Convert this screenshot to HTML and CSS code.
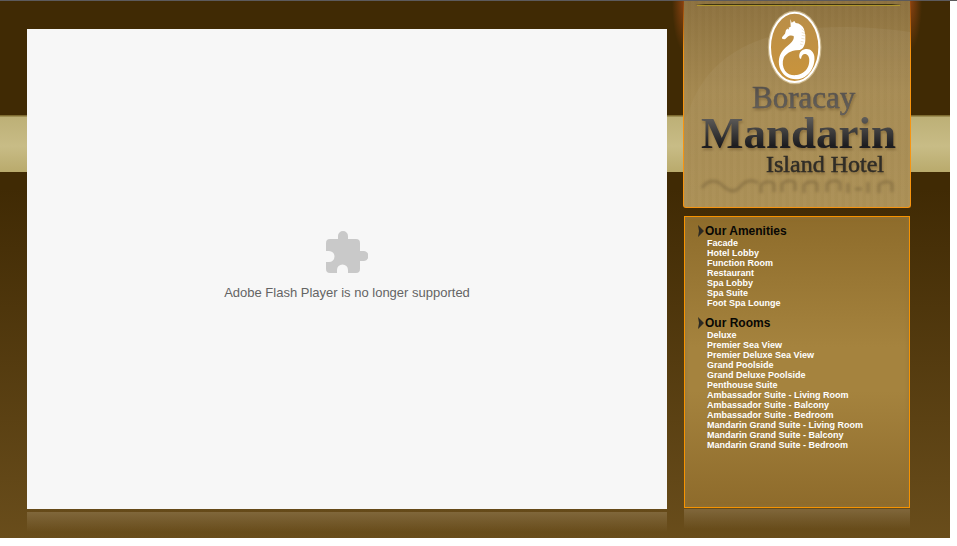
FILE: index.html
```html
<!DOCTYPE html>
<html lang="en">
<head>
<meta charset="utf-8">
<title>Boracay Mandarin Island Hotel - Gallery</title>
<link rel="stylesheet" href="styles.css">
</head>
<body>
<div class="page">
  <main class="stage">
    <div class="player">
      <svg class="puzzle" viewBox="0 0 42 42" aria-hidden="true"><path d="M38 20h-4v-8a4 4 0 0 0-4-4h-8V5a5 5 0 0 0-10 0v3H4a4 4 0 0 0-4 4v8h3a5.500 5.500 0 0 1 0 11H0v7a4 4 0 0 0 4 4h7v-3a5.500 5.500 0 0 1 11 0v3h8a4 4 0 0 0 4-4v-8h3a5 5 0 0 0 1-10z"/></svg>
      <p class="message">Adobe Flash Player is no longer supported</p>
    </div>
    <div class="shine player-shine"></div>
  </main>
  <aside class="sidebar">
    <div class="brand">
      <svg class="logo" viewBox="0 0 226 206" role="img" aria-label="Boracay Mandarin Island Hotel">
        <defs>
          <linearGradient id="ink" x1="0" y1="0" x2="0" y2="1"><stop offset=".2" stop-color="#5d5b58"/><stop offset=".75" stop-color="#1d1d20"/></linearGradient>
          <linearGradient id="grey" x1="0" y1="0" x2="0" y2="1"><stop offset="0" stop-color="#4f4a45"/><stop offset="1" stop-color="#68645f"/></linearGradient>
          <linearGradient id="gold" x1="0" y1="0" x2="0" y2="1"><stop offset="0" stop-color="#b98e48"/><stop offset="1" stop-color="#ca943b"/></linearGradient>
          <linearGradient id="fade" x1="0" y1="0" x2="0" y2="1"><stop offset="0" stop-color="#fff" stop-opacity=".05"/><stop offset="1" stop-color="#fff" stop-opacity="0"/></linearGradient>
          <linearGradient id="rule" x1="0" y1="0" x2="1" y2="0"><stop offset="0" stop-color="#3e3510" stop-opacity="0"/><stop offset=".05" stop-color="#3e3510"/><stop offset=".95" stop-color="#3e3510"/><stop offset="1" stop-color="#3e3510" stop-opacity="0"/></linearGradient>
          <filter id="soft" x="-10%" y="-50%" width="120%" height="200%"><feGaussianBlur stdDeviation="1.500"/></filter>
        </defs>
        <path d="M5 110C24 50 88 12 226 31V206H0V120z" fill="url(#fade)"/>
        <rect x="11" y="3" width="207" height="1" fill="url(#rule)"/>
        <rect x="13" y="4" width="203" height="1" fill="#b2972c"/>
        <g transform="translate(56 -1) scale(.3333)">
          <ellipse cx="164" cy="142" rx="76" ry="106" fill="none" stroke="#f5e6bf" stroke-width="9" opacity=".5"/>
          <ellipse cx="164" cy="142" rx="74" ry="104" fill="url(#gold)" stroke="#fff" stroke-width="6"/>
          <path fill="#fff" d="M151 57l4 11 8-5 4 6c12 1 21 8 25 18l4 18 0 15c0 10-3 17-8 25l-8 5-12 1c-14 1-31 10-37 23-5 12-3 27 4 38 8 11 21 15 36 13 17-2 31-15 35-30 4-14 2-28-7-32-8-3-14 1-16 14l-4-2c-4-12 2-24 15-27 16-4 27 7 29 21 3 23-8 49-29 62-17 10-41 9-56-2-18-13-26-38-19-60 6-18 20-29 31-38 9-8 13-15 11-23-6-3-14-2-18 2l-8 8-8-1-1-5 9-11 3-11 8-7 6-3z"/>
          <circle cx="145" cy="86" r="2" fill="#bd9145"/>
          <path d="M185 87l8 6m-8 4l10 4m-10 5l11 2m-12 7l10 2m-12 7l9 2m-11 6l8 2" stroke="#d7ba83" stroke-width="2" opacity=".6"/>
        </g>
        <g class="wordmark">
          <text x="68" y="107" font-size="31" fill="url(#grey)" stroke="#5b5650" stroke-width="0.500">Boracay</text>
          <text x="17" y="147" font-size="45" font-weight="bold" fill="url(#ink)">Mandarin</text>
          <text x="82" y="171" font-size="24" fill="#302d27" stroke="#302d27" stroke-width="0.500">Island Hotel</text>
        </g>
        <g filter="url(#soft)" opacity=".28" fill="none" stroke="#45351b" stroke-width="3"><path d="M18 187c5-8 14-9 20-3s12 8 17 3c6-8 14-9 19-5"/><path d="M77 192v-8c3-4 11-4 13-1v8M98 191v-8c3-4 11-4 13-1v8M120 192v-8c3-4 11-4 13-1v8M143 191v-8c3-4 11-4 13-1v8M164 192v-10M171 188h7M184 192v-11M195 192v-8c3-4 11-4 13-1v8"/></g>
      </svg>
    </div>
    <nav class="menu" aria-label="Gallery">
      <h2><svg class="arrow" viewBox="0 0 7 12" aria-hidden="true"><path d="M0 0l6 6-6 6 1-6z"/></svg>Our Amenities</h2>
      <ul>
        <li><a href="#facade">Facade</a></li>
        <li><a href="#lobby">Hotel Lobby</a></li>
        <li><a href="#function-room">Function Room</a></li>
        <li><a href="#restaurant">Restaurant</a></li>
        <li><a href="#spa-lobby">Spa Lobby</a></li>
        <li><a href="#spa-suite">Spa Suite</a></li>
        <li><a href="#foot-spa">Foot Spa Lounge</a></li>
      </ul>
      <h2><svg class="arrow" viewBox="0 0 7 12" aria-hidden="true"><path d="M0 0l6 6-6 6 1-6z"/></svg>Our Rooms</h2>
      <ul>
        <li><a href="#deluxe">Deluxe</a></li>
        <li><a href="#premier">Premier Sea View</a></li>
        <li><a href="#premier-deluxe">Premier Deluxe Sea View</a></li>
        <li><a href="#grand">Grand Poolside</a></li>
        <li><a href="#grand-deluxe">Grand Deluxe Poolside</a></li>
        <li><a href="#penthouse">Penthouse Suite</a></li>
        <li><a href="#ambassador-living">Ambassador Suite - Living Room</a></li>
        <li><a href="#ambassador-balcony">Ambassador Suite - Balcony</a></li>
        <li><a href="#ambassador-bedroom">Ambassador Suite - Bedroom</a></li>
        <li><a href="#mandarin-living">Mandarin Grand Suite - Living Room</a></li>
        <li><a href="#mandarin-balcony">Mandarin Grand Suite - Balcony</a></li>
        <li><a href="#mandarin-bedroom">Mandarin Grand Suite - Bedroom</a></li>
      </ul>
    </nav>
    <div class="shine menu-shine"></div>
  </aside>
</div>
</body>
</html>
```

FILE: styles.css
```css
* { box-sizing: border-box; }

body {
  margin: 0;
  padding: 0 7px 8px 0;
  background: linear-gradient(#5c5a5c, #5c5a5c) top / 100% 1px no-repeat #fff;
  font-family: "Liberation Sans", Arial, sans-serif;
}

.page {
  display: grid;
  grid-template-columns: minmax(0, 1fr) 228px;
  gap: 16px;
  padding: 0 39px 6px 27px;
  border-top: 1px solid #5c5a5c;
  background:
    linear-gradient(#7d6a30 0, #7d6a30 1px, #bdb077 2px, #c8bc86 55%, #b9aa6c 100%) 0 114px / 100% 57px no-repeat,
    linear-gradient(#402a04 0, #402a04 35%, #694d1b 100%);
}

.stage { padding-top: 28px; }

.player {
  display: flex;
  flex-direction: column;
  align-items: center;
  justify-content: center;
  gap: 12px;
  min-height: 480px;
  padding-bottom: 6px;
  background: #f7f7f7;
}

.puzzle {
  width: 42px;
  height: 42px;
  fill: #c9c9c9;
}

.message {
  margin: 0;
  color: #646464;
  font-size: 13px;
  line-height: 16px;
}

.shine {
  height: 20px;
  background: linear-gradient(#80673b, #80673b00);
}

.player-shine { margin-top: 3px; }

.menu-shine { margin: 1px 1px 0; }

.brand {
  position: relative;
  border: 1px solid #f79410;
  border-top: 0;
  border-radius: 0 0 3px 3px;
  background:
    repeating-linear-gradient(90deg, #ffffff03 0, #ffffff03 3px, #00000003 4px, #00000003 7px),
    linear-gradient(#8e7240, #a58950 45%, #ac9157);
}

.brand::before,
.brand::after {
  content: "";
  position: absolute;
  top: 0;
  width: 12px;
  height: 50px;
}

.brand::before {
  right: 100%;
  background: radial-gradient(ellipse 12px 50px at 100% 0, #8b4210, #8b421000);
}

.brand::after {
  left: 100%;
  background: radial-gradient(ellipse 12px 50px at 0 0, #8b4210, #8b421000);
}

.logo {
  display: block;
  width: 100%;
}

.wordmark {
  font-family: "Liberation Serif", "Times New Roman", serif;
  filter: drop-shadow(1px 2px 1px #6b522880);
}

.menu {
  min-height: 292px;
  margin: 8px 1px 0;
  padding: 7px 13px;
  border: 1px solid #f79300;
  background: linear-gradient(#8e6c2b, #a5833e 45%, #a5833e 60%, #8e6b2b);
  box-shadow: inset 0 0 4px #8e743e;
}

.menu h2 {
  display: flex;
  align-items: center;
  margin: 0;
  color: #080704;
  font-size: 12px;
  line-height: 14px;
}

.arrow {
  width: 7px;
  height: 12px;
  fill: #2c2922;
}

.menu ul {
  margin: 0 0 8px;
  padding: 0 0 0 9px;
  list-style: none;
}

.menu li {
  font-size: 9px;
  font-weight: bold;
  line-height: 10px;
}

.menu a {
  display: block;
  color: #fff;
  text-decoration: none;
}
```
